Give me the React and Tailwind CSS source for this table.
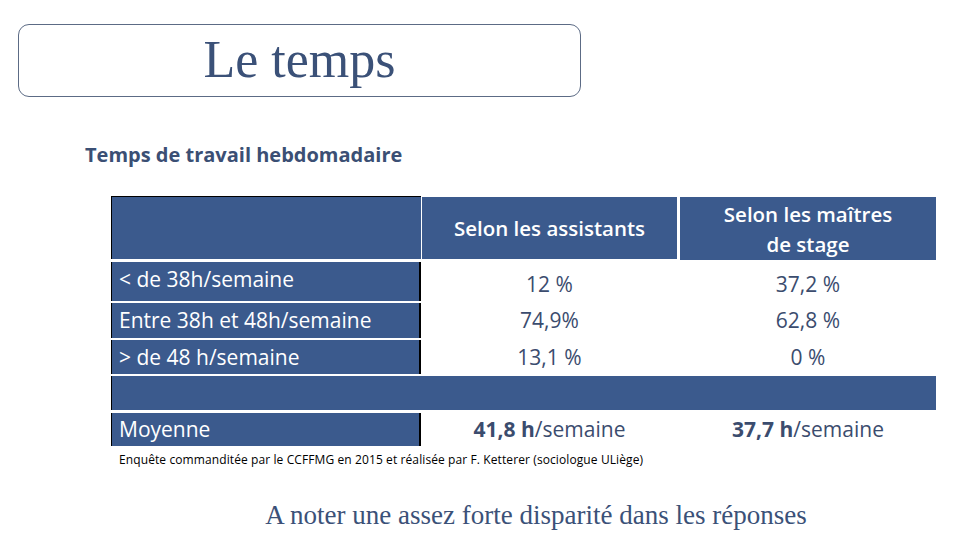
const blue = "bg-[#3b5a8d]";

const rows = [
  { label: "< de 38h/semaine", a: "12 %", b: "37,2 %", h: "h-[39px]", mt: "mt-[3px]", lp: "pb-[4px]", vp: "pt-[6px]" },
  { label: "Entre 38h et 48h/semaine", a: "74,9%", b: "62,8 %", h: "h-[35px]", mt: "mt-[2px]", lp: "pt-[1px]", vp: "pt-[1px]" },
  { label: "> de 48 h/semaine", a: "13,1 %", b: "0 %", h: "h-[34px]", mt: "mt-[2px]", lp: "pt-[1px]", vp: "pt-[1px]" },
];

function LeftCell({ children, className = "" }) {
  return (
    <div
      className={`w-[310px] shrink-0 ${blue} border-l border-black border-r-2 flex items-center pl-[7px] text-white text-[21px] ${className}`}
    >
      {children}
    </div>
  );
}

function ValueCell({ children, w, className = "" }) {
  return (
    <div className={`${w} shrink-0 flex items-center justify-center text-[21px] text-[#3b4c6e] ${className}`}>
      {children}
    </div>
  );
}

export default function App() {
  return (
    <div
      className="w-[960px] h-[540px] bg-white overflow-hidden"
      style={{ fontFamily: '"Open Sans", "Noto Sans", sans-serif' }}
    >
      <div className="ml-[18px] mt-[24px] w-[563px] h-[73px] rounded-[11px] border border-[#5c6b85] flex items-center justify-center">
        <h1
          className="text-[52px] leading-none text-[#3b5178] -mt-[2px]"
          style={{ fontFamily: '"Liberation Serif", "DejaVu Serif", serif' }}
        >
          Le temps
        </h1>
      </div>

      <p className="ml-[85px] mt-[44px] text-[20px] font-bold text-[#3b4f74] leading-[28px]">
        Temps de travail hebdomadaire
      </p>

      <div className="ml-[111px] mt-[27px] w-[825px] flex flex-col">
        <div className="flex h-[63px]">
          <div className={`w-[310px] shrink-0 ${blue} border-l border-t border-black`} />
          <div className="w-[1px] shrink-0" />
          <div className={`w-[255px] shrink-0 ${blue} mt-[1px] flex items-center justify-center text-white text-[20.5px] font-semibold`}>
            Selon les assistants
          </div>
          <div className="w-[3px] shrink-0" />
          <div className={`w-[256px] shrink-0 ${blue} mt-[1px] -mb-[1px] flex flex-col items-center justify-center text-white text-[20.5px] font-semibold leading-[30px]`}>
            <span>Selon les maîtres</span>
            <span>de stage</span>
          </div>
        </div>

        {rows.map((r) => (
          <div key={r.label} className={`flex ${r.h} ${r.mt}`}>
            <LeftCell className={r.lp}>{r.label}</LeftCell>
            <div className="w-[1px] shrink-0" />
            <ValueCell w="w-[255px]" className={r.vp}>{r.a}</ValueCell>
            <div className="w-[3px] shrink-0" />
            <ValueCell w="w-[256px]" className={r.vp}>{r.b}</ValueCell>
          </div>
        ))}

        <div className={`mt-[2px] h-[34px] ${blue} border-l border-black`} />

        <div className="flex h-[33px] mt-[3px]">
          <LeftCell>Moyenne</LeftCell>
          <div className="w-[1px] shrink-0" />
          <ValueCell w="w-[255px]">
            <span>
              <b className="font-bold">41,8 h</b>/semaine
            </span>
          </ValueCell>
          <div className="w-[3px] shrink-0" />
          <ValueCell w="w-[256px]">
            <span>
              <b className="font-bold">37,7 h</b>/semaine
            </span>
          </ValueCell>
        </div>
      </div>

      <p className="ml-[119px] mt-[7px] text-[12px] leading-[14px] text-black tracking-[0.1px]">
        Enquête commanditée par le CCFFMG en 2015 et réalisée par F. Ketterer (sociologue ULiège)
      </p>

      <p
        className="mt-[32px] text-center pl-[112px] text-[27px] leading-[32px] text-[#3b5178]"
        style={{ fontFamily: '"Liberation Serif", "DejaVu Serif", serif' }}
      >
        A noter une assez forte disparité dans les réponses
      </p>
    </div>
  );
}
